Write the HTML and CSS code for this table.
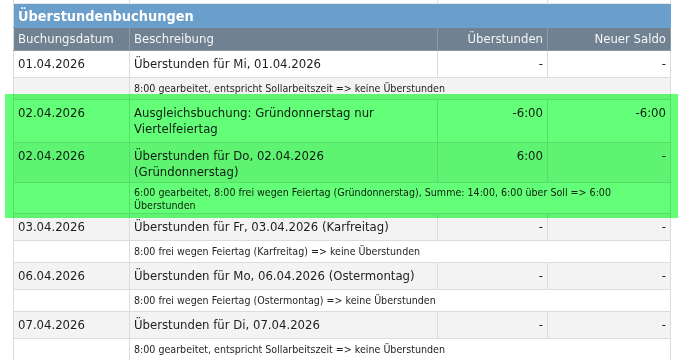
FILE: index.html
```html
<!DOCTYPE html>
<html lang="de">
<head>
<meta charset="utf-8">
<title>Überstundenbuchungen</title>
<link rel="stylesheet" href="styles.css">
</head>
<body>
<div class="page">
  <table class="tbl">
    <colgroup>
      <col class="c-date">
      <col class="c-desc">
      <col class="c-ot">
      <col class="c-saldo">
    </colgroup>
    <tr class="stub"><td></td><td></td><td></td><td></td></tr>
    <tr class="title"><th colspan="4">Überstundenbuchungen</th></tr>
    <tr class="head">
      <th>Buchungsdatum</th>
      <th>Beschreibung</th>
      <th class="num">Überstunden</th>
      <th class="num">Neuer Saldo</th>
    </tr>
    <tr class="main white">
      <td>01.04.2026</td>
      <td class="desc">Überstunden für Mi, 01.04.2026</td>
      <td class="num">-</td>
      <td class="num">-</td>
    </tr>
    <tr class="note grey">
      <td></td>
      <td colspan="3">8:00 gearbeitet, entspricht Sollarbeitszeit =&gt; keine Überstunden</td>
    </tr>
    <tr class="main white">
      <td>02.04.2026</td>
      <td class="desc">Ausgleichsbuchung: Gründonnerstag nur Viertelfeiertag</td>
      <td class="num">-6:00</td>
      <td class="num">-6:00</td>
    </tr>
    <tr class="main grey snug">
      <td>02.04.2026</td>
      <td class="desc">Überstunden für Do, 02.04.2026 (Gründonnerstag)</td>
      <td class="num">6:00</td>
      <td class="num">-</td>
    </tr>
    <tr class="note white tall">
      <td></td>
      <td colspan="3">6:00 gearbeitet, 8:00 frei wegen Feiertag (Gründonnerstag), Summe: 14:00, 6:00 über Soll =&gt; 6:00 Überstunden</td>
    </tr>
    <tr class="main grey">
      <td>03.04.2026</td>
      <td class="desc">Überstunden für Fr, 03.04.2026 (Karfreitag)</td>
      <td class="num">-</td>
      <td class="num">-</td>
    </tr>
    <tr class="note white">
      <td></td>
      <td colspan="3">8:00 frei wegen Feiertag (Karfreitag) =&gt; keine Überstunden</td>
    </tr>
    <tr class="main grey">
      <td>06.04.2026</td>
      <td class="desc">Überstunden für Mo, 06.04.2026 (Ostermontag)</td>
      <td class="num">-</td>
      <td class="num">-</td>
    </tr>
    <tr class="note white">
      <td></td>
      <td colspan="3">8:00 frei wegen Feiertag (Ostermontag) =&gt; keine Überstunden</td>
    </tr>
    <tr class="main grey">
      <td>07.04.2026</td>
      <td class="desc">Überstunden für Di, 07.04.2026</td>
      <td class="num">-</td>
      <td class="num">-</td>
    </tr>
    <tr class="note white">
      <td></td>
      <td colspan="3">8:00 gearbeitet, entspricht Sollarbeitszeit =&gt; keine Überstunden</td>
    </tr>
  </table>
  <div class="highlight"></div>
</div>
</body>
</html>
```

FILE: styles.css
```css
html, body {
  margin: 0;
  padding: 0;
  background: #ffffff;
}

.page {
  position: relative;
  width: 678px;
  height: 360px;
  overflow: hidden;
  padding-left: 13px;
  box-sizing: border-box;
  font-family: "DejaVu Sans Condensed", "DejaVu Sans", sans-serif;
  font-stretch: condensed;
  color: #1e1e1e;
}

.tbl {
  border-collapse: collapse;
  table-layout: fixed;
  width: 657px;
}

.c-date { width: 116px; }
.c-desc { width: 308px; }
.c-ot { width: 110px; }
.c-saldo { width: 123px; }

.tbl td,
.tbl th {
  border: 1px solid #dcdcdc;
  padding: 0 4px;
  text-align: left;
  vertical-align: top;
  overflow: hidden;
}

.tbl .num {
  text-align: right;
}

.stub td {
  height: 3px;
  padding: 0;
  border-top: none;
  border-bottom: 1px solid #e6e6e6;
}

.title th {
  background: #6a9ecb;
  color: #ffffff;
  font-weight: bold;
  font-size: 14.4px;
  line-height: 18px;
  padding: 3px 4px 2px;
  border-color: #6a9ecb;
  border-left-color: #dcdcdc;
}

.head th {
  background: #708191;
  color: #f4f6f8;
  font-weight: normal;
  font-size: 13px;
  line-height: 16px;
  padding: 3px 4px 3px;
  border-color: #8c9aa7;
}

.head th:first-child {
  border-left-color: #dcdcdc;
}

.main td {
  font-size: 13px;
  line-height: 16px;
  padding: 5px 4px 5px;
}

.main td.desc {
  padding-right: 10px;
}

.main.snug td {
  padding-bottom: 2px;
}

.note td {
  font-size: 10.6px;
  line-height: 13px;
  padding: 4px 10px 4px 4px;
}

.note.tall td {
  padding-top: 3px;
  padding-bottom: 1px;
}

.white td { background: #ffffff; }
.grey td { background: #f3f3f3; }

.highlight {
  position: absolute;
  left: 5px;
  top: 94px;
  width: 673px;
  height: 124px;
  background: #64ff78;
  mix-blend-mode: multiply;
}
```
